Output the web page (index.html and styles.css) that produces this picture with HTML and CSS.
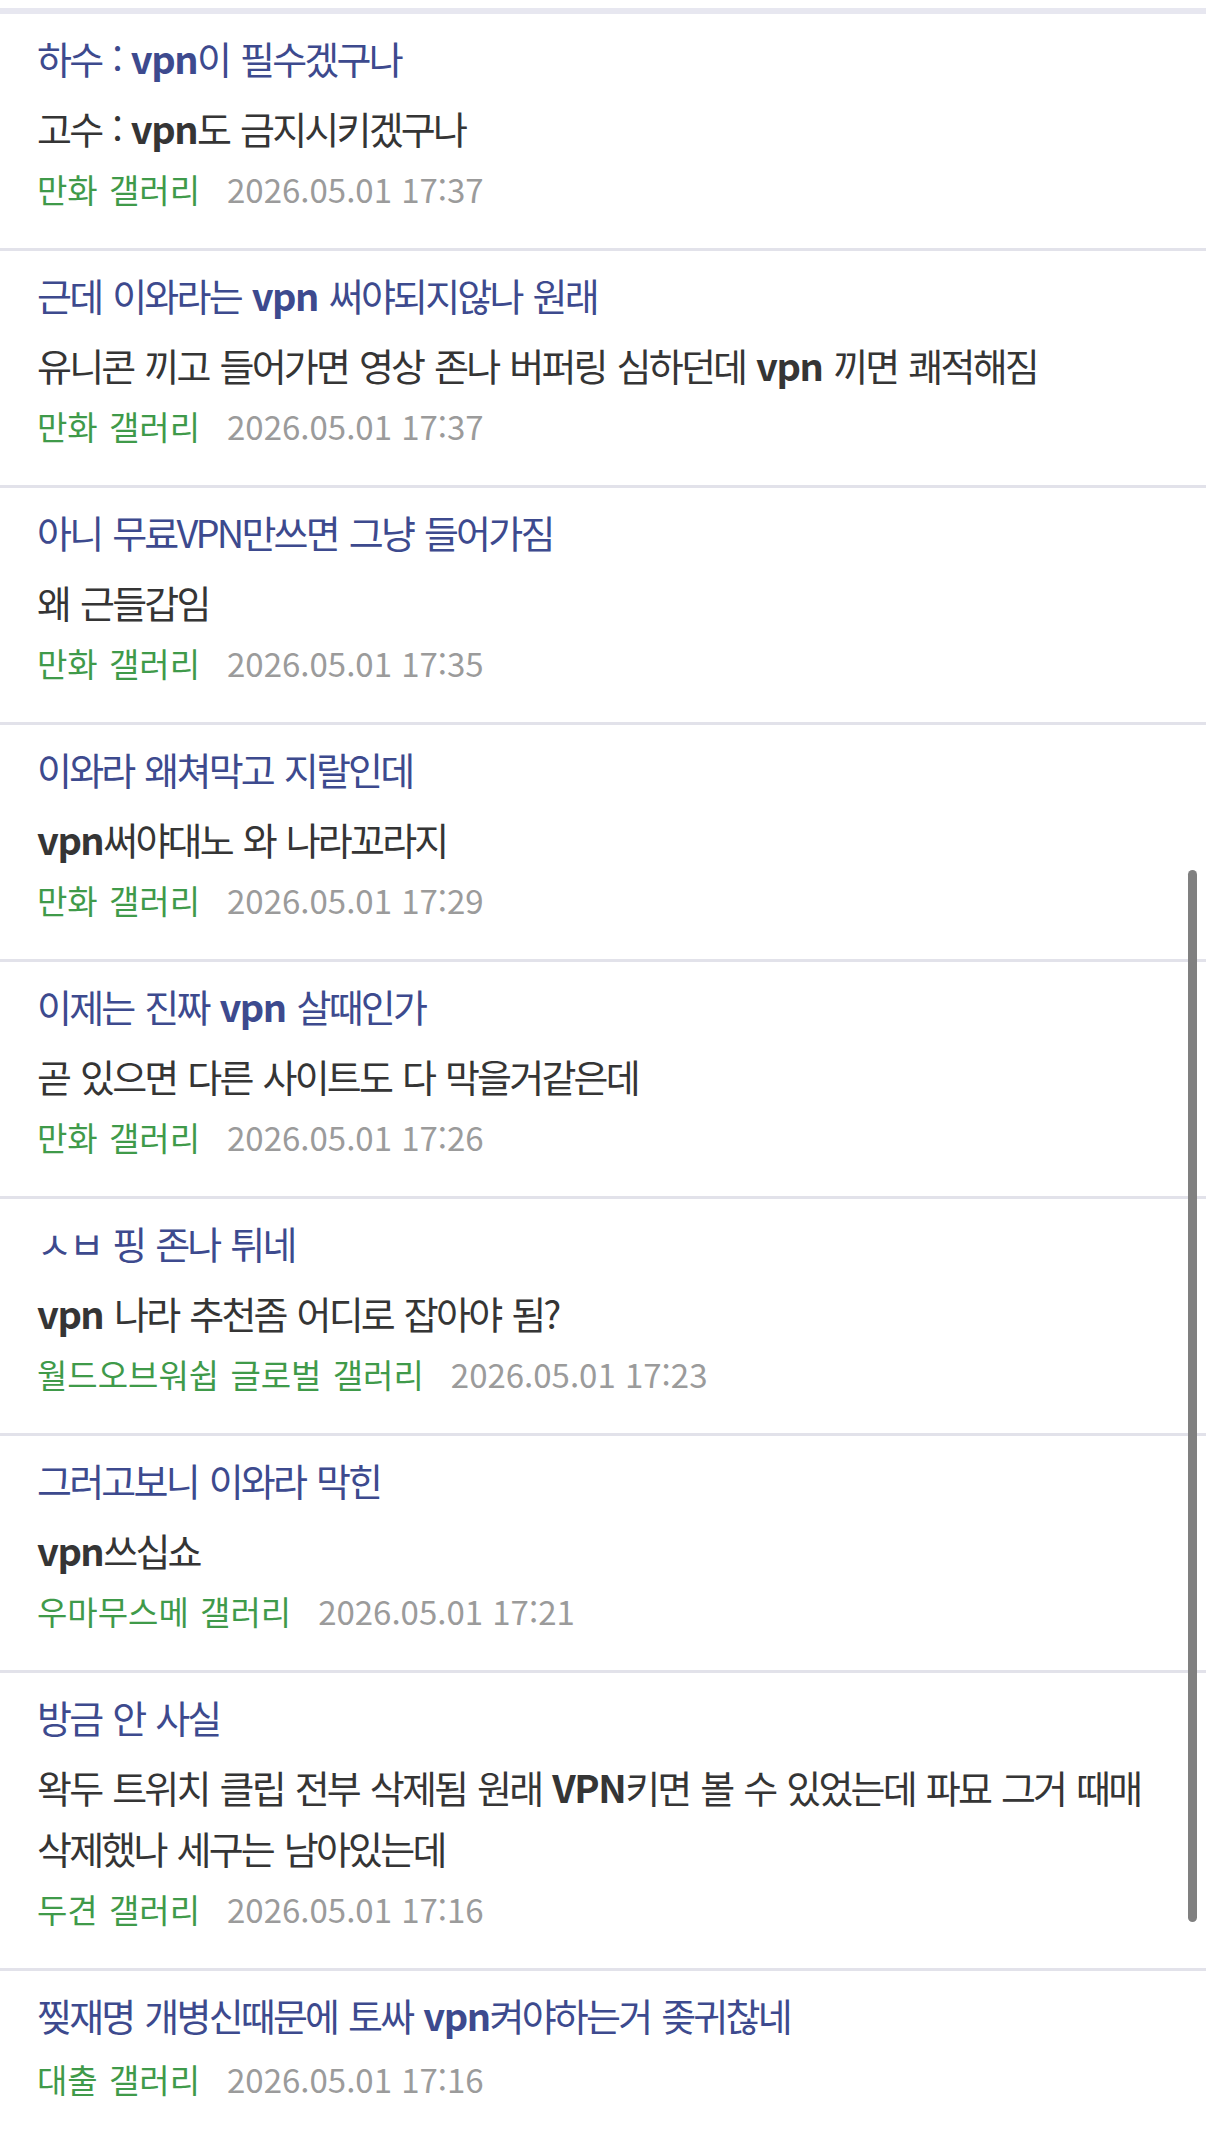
FILE: index.html
```html
<!DOCTYPE html>
<html lang="ko">
<head>
    <meta charset="UTF-8">
    <meta name="viewport" content="width=device-width, initial-scale=1.0">
    <title>검색 결과 - vpn</title>
    <link rel="stylesheet" href="styles.css">
</head>
<body>

    <ul class="result-list">
        <li class="result">
            <div class="title">하수 : <b>vpn</b>이 필수겠구나</div>
            <div class="body">고수 : <b>vpn</b>도 금지시키겠구나</div>
            <div class="meta"><span class="gall">만화 갤러리</span><span class="date">2026.05.01 17:37</span></div>
        </li>
        <li class="result">
            <div class="title">근데 이와라는 <b>vpn</b> 써야되지않나 원래</div>
            <div class="body">유니콘 끼고 들어가면 영상 존나 버퍼링 심하던데 <b>vpn</b> 끼면 쾌적해짐</div>
            <div class="meta"><span class="gall">만화 갤러리</span><span class="date">2026.05.01 17:37</span></div>
        </li>
        <li class="result">
            <div class="title">아니 무료VPN만쓰면 그냥 들어가짐</div>
            <div class="body">왜 근들갑임</div>
            <div class="meta"><span class="gall">만화 갤러리</span><span class="date">2026.05.01 17:35</span></div>
        </li>
        <li class="result">
            <div class="title">이와라 왜쳐막고 지랄인데</div>
            <div class="body"><b>vpn</b>써야대노 와 나라꼬라지</div>
            <div class="meta"><span class="gall">만화 갤러리</span><span class="date">2026.05.01 17:29</span></div>
        </li>
        <li class="result">
            <div class="title">이제는 진짜 <b>vpn</b> 살때인가</div>
            <div class="body">곧 있으면 다른 사이트도 다 막을거같은데</div>
            <div class="meta"><span class="gall">만화 갤러리</span><span class="date">2026.05.01 17:26</span></div>
        </li>
        <li class="result">
            <div class="title">ㅅㅂ 핑 존나 튀네</div>
            <div class="body"><b>vpn</b> 나라 추천좀 어디로 잡아야 됨?</div>
            <div class="meta"><span class="gall">월드오브워쉽 글로벌 갤러리</span><span class="date">2026.05.01 17:23</span></div>
        </li>
        <li class="result">
            <div class="title">그러고보니 이와라 막힌</div>
            <div class="body"><b>vpn</b>쓰십쇼</div>
            <div class="meta"><span class="gall">우마무스메 갤러리</span><span class="date">2026.05.01 17:21</span></div>
        </li>
        <li class="result">
            <div class="title">방금 안 사실</div>
            <div class="body">왁두 트위치 클립 전부 삭제됨 원래 <b>VPN</b>키면 볼 수 있었는데 파묘 그거 때매 삭제했나 세구는 남아있는데</div>
            <div class="meta"><span class="gall">두견 갤러리</span><span class="date">2026.05.01 17:16</span></div>
        </li>
        <li class="result">
            <div class="title">찢재명 개병신때문에 토싸 <b>vpn</b>켜야하는거 좆귀찮네</div>
            <div class="meta"><span class="gall">대출 갤러리</span><span class="date">2026.05.01 17:16</span></div>
        </li>
    </ul>

    <div class="scrollbar"></div>

</body>
</html>
```

FILE: styles.css
```css
body {
    margin: 0;
    background-color: #fff;
    font-family: "Noto Sans CJK KR", "Noto Sans", sans-serif;
}
.result-list {
    list-style: none;
    margin: 8px 0 0 0;
    padding: 0;
    border-top: 6px solid #e7e7f0;
}
.result {
    padding: 17px 20px 34px 37px;
    border-bottom: 3px solid #e2e2ea;
}
.result:last-child {
    border-bottom: none;
}
.title,
.body {
    font-size: 38px;
    letter-spacing: -2.8px;
    word-spacing: 3px;
    word-break: keep-all;
}
.title b,
.body b {
    letter-spacing: -1.5px;
}
.title {
    color: #3d4a8e;
    line-height: 54px;
    margin-bottom: 12px;
}
.body {
    color: #353535;
    line-height: 61px;
}
.meta {
    margin-top: 6px;
    line-height: 50px;
    font-size: 33px;
    display: flex;
    gap: 27px;
}
.gall {
    color: #3f9a4a;
    letter-spacing: 0;
    word-spacing: 2px;
}
.date {
    color: #9b9b9b;
    font-size: 33px;
}
.scrollbar {
    position: absolute;
    top: 870px;
    right: 9px;
    width: 9px;
    height: 1052px;
    border-radius: 5px;
    background-color: #808080;
}
```
